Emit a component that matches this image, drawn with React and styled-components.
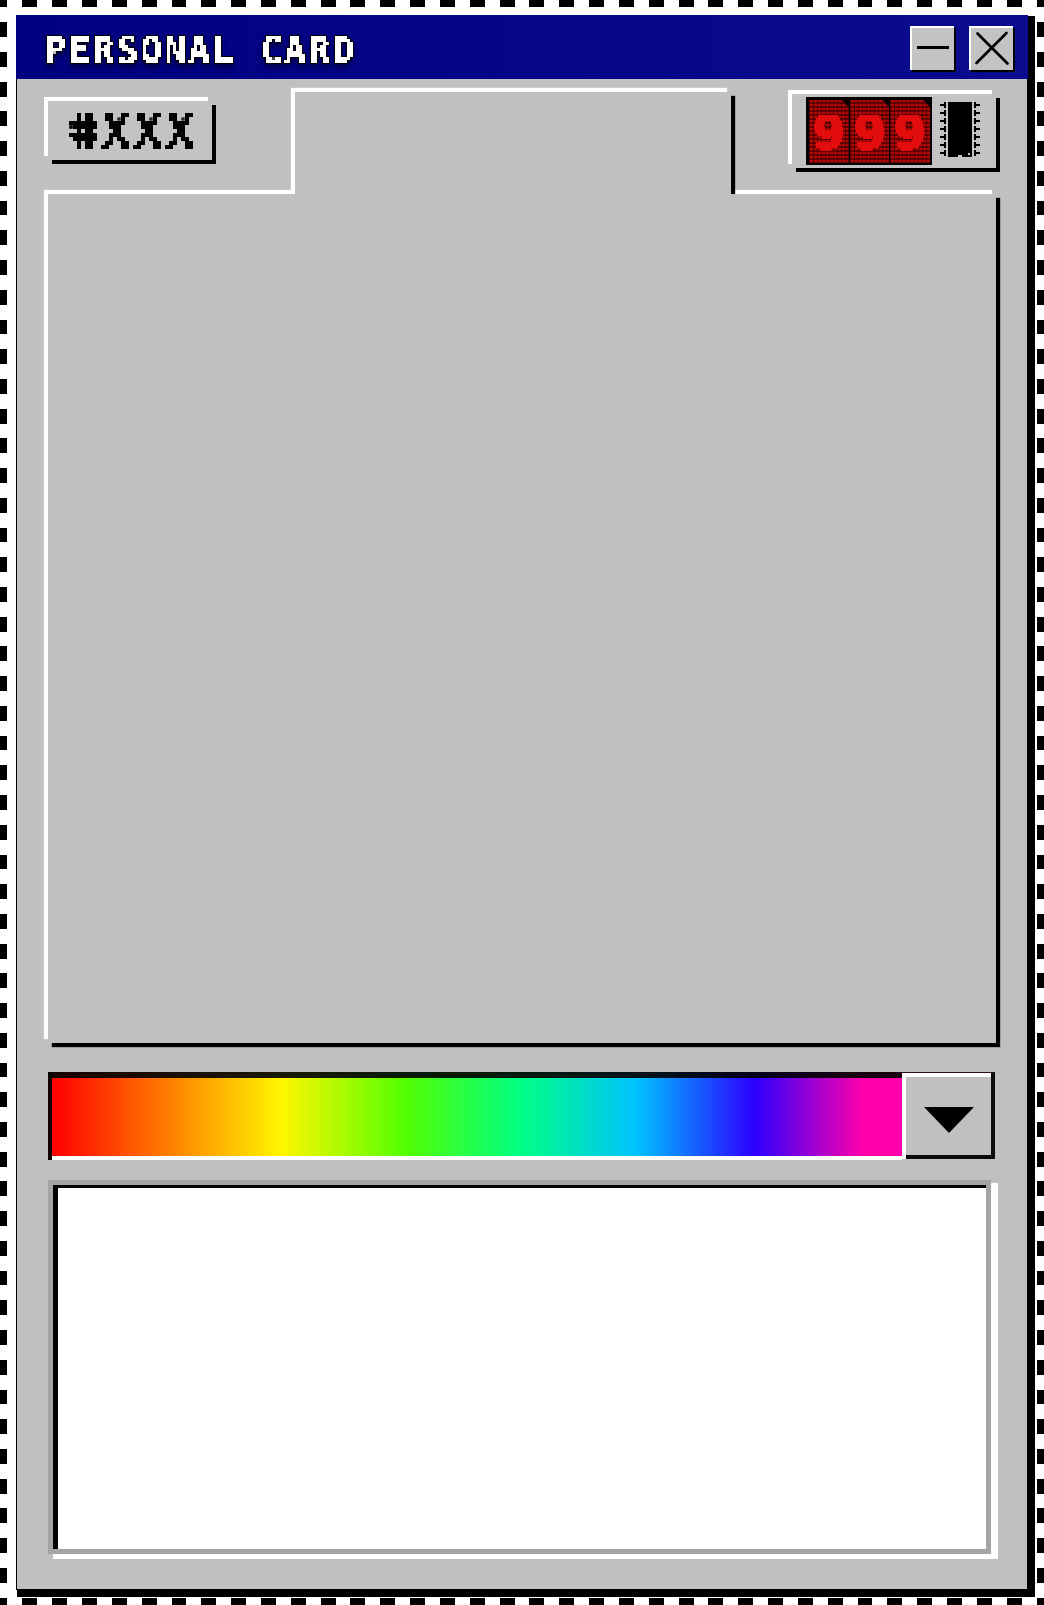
import React from "react";
import styled, { createGlobalStyle } from "styled-components";

const GlobalStyle = createGlobalStyle`
  * { box-sizing: border-box; }
  body { margin: 0; background: #fff; }
`;

const mono = `"DejaVu Sans Mono", "Liberation Mono", monospace`;
const stitch = (dir, step) =>
  `repeating-linear-gradient(${dir}, #000 0 ${step / 4}px, #fff ${step / 4}px ${(step * 3) / 4}px, #000 ${(step * 3) / 4}px ${step}px)`;
const across = stitch("to right", 1044 / 35);
const down = stitch("to bottom", 1605 / 54);

const Desktop = styled.main`
  width: 1044px;
  height: 1605px;
  padding: 15px 16px;
  overflow: hidden;
  background:
    ${across} 0 0 / 100% 7px no-repeat,
    ${across} 0 100% / 100% 7px no-repeat,
    ${down} 0 0 / 7px 100% no-repeat,
    ${down} 100% 0 / 7px 100% no-repeat,
    #fff;
`;

const FilterDefs = styled.svg`
  display: block;
  width: 0;
  height: 0;
`;

const Window = styled.section`
  width: 1012px;
  height: 1575px;
  border: 1px solid #000;
  background: #c0c0c0;
  box-shadow: 4px 4px 0 3px #000;
`;

const TitleBar = styled.header`
  display: flex;
  align-items: flex-start;
  justify-content: space-between;
  height: 64px;
  margin: -1px -1px 0;
  padding: 11px 15px 0 29px;
  background: linear-gradient(to right, #000080, #0b0b90);
`;

const PixelText = styled.span`
  display: block;
  filter: url(#pixels-${(p) => p.$cell});
`;

const Title = styled.h1`
  margin: 1px 0 0 -1px;
  font: bold 37px/47px ${mono};
  letter-spacing: 1.73px;
  white-space: pre;
  color: #fff;
  filter: drop-shadow(1px 0 #000) drop-shadow(-1px 0 #000) drop-shadow(0 1px #000)
    drop-shadow(0 -1px #000) drop-shadow(0 4px 2px rgba(0, 0, 0, 0.4));
`;

const Controls = styled.div`
  display: flex;
  gap: 15px;
`;

const ControlButton = styled.button`
  width: 44px;
  height: 44px;
  padding: 0;
  border: solid #fff;
  border-width: 2px 0 0 2px;
  border-radius: 0;
  background: #c3c3c3;
  box-shadow: 2px 2px #000;
  svg { display: block; }
`;

const HeaderRow = styled.div`
  display: flex;
  align-items: flex-start;
  height: 115px;
  padding-left: 31px;
`;

const Raised = styled.div`
  background: #c3c3c3;
  box-shadow: -4px -4px #fff, 4px 4px #000;
`;

const IdBadge = styled(Raised)`
  width: 164px;
  height: 59px;
  margin-top: 22px;
  padding-left: 21px;
  font: bold 49px/61px ${mono};
  letter-spacing: 2.5px;
  color: #000;
`;

const Hash = styled.span`
  display: inline-block;
  transform: skewX(13deg);
`;

const FolderTab = styled.div`
  position: relative;
  z-index: 1;
  width: 436px;
  height: 102px;
  margin: 13px 61px 0 83px;
  background: #c0c0c0;
  box-shadow: -4px -4px 1px #fff, 4px 4px 1px #000;
  clip-path: inset(-6px -6px 0 -6px);
`;

const Counter = styled(Raised)`
  display: flex;
  width: 204px;
  height: 74px;
  margin-top: 15px;
  padding: 3px 0 0 14px;
`;

const LedPanel = styled.div`
  display: flex;
  gap: 1px;
  width: 126px;
  height: 68px;
  padding: 3px 2px 2px 3px;
  background: #000;
`;

const Digit = styled.div`
  flex: 1;
  height: 63px;
  overflow: hidden;
  clip-path: polygon(0 0, 33px 0, 100% 7px, 100% 100%, 0 100%);
  background:
    repeating-linear-gradient(to right, rgba(40, 0, 0, 0.5) 0 1px, transparent 1px 4px),
    repeating-linear-gradient(to bottom, #b10808 0 2px, #680000 2px 4px);
  font: bold 47px/65px ${mono};
  text-align: center;
  color: #e20d0d;
  -webkit-text-stroke: 1px #e20d0d;
`;

const Stretch = styled.div`
  transform: scaleX(1.13);
`;

const ChipIcon = styled.svg`
  display: block;
  margin: 5px 0 0 8px;
`;

const FolderBody = styled.div`
  width: 948px;
  height: 849px;
  margin-left: 31px;
  background: #c0c0c0;
  box-shadow: -4px -4px 1px #fff, 4px 4px 1px #000;
`;

const ColorPicker = styled.div`
  display: flex;
  width: 948px;
  height: 88px;
  margin: 29px 0 0 31px;
`;

const Spectrum = styled.div`
  width: 854px;
  padding-left: 4px;
  background: linear-gradient(to right, #ff0000 0, #ff7800 13%, #fff600 27%, #53ff00 41.5%, #00ff83 55%, #00c3ff 68.7%, #2c00ff 82.6%, #ff00aa 95.5%) content-box;
  box-shadow: inset 0 6px rgba(0, 0, 0, 0.9), inset 4px 0 #140000, inset 0 -4px #fff;
`;

const DropButton = styled.button`
  display: grid;
  place-items: center;
  width: 93px;
  height: 87px;
  padding: 9px 0 0;
  border: 0;
  background: #c0c0c0;
  box-shadow: inset 0 1px #2a1020, inset -4px 0 #0c0c0c, inset 0 5px #fff,
    inset 4px 0 #fff, inset 0 -4px #0c0c0c;
`;

const TextPanel = styled.div`
  width: 943px;
  height: 374px;
  margin: 20px 0 0 31px;
  border: 5px solid #a4a4a4;
  background: #fff;
  box-shadow: inset 5px 3px #000, 5px 5px #fff, 7px 5px #fff, 7px 3px #fff;
`;

const PixelFilter = ({ cell, threshold }) => (
  <filter
    id={`pixels-${cell}`}
    filterUnits="userSpaceOnUse"
    primitiveUnits="userSpaceOnUse"
    x="0"
    y="0"
    width="400"
    height="72"
    colorInterpolationFilters="sRGB"
  >
    <feFlood x="1" y="1" width="1" height="1" floodColor="#000" result="dot" />
    <feComposite in="dot" in2="dot" operator="over" x="0" y="0" width={cell} height={cell} />
    <feTile result="grid" />
    <feComposite in="SourceGraphic" in2="grid" operator="in" />
    <feComponentTransfer>
      <feFuncA type="linear" slope="20" intercept={-20 * threshold} />
    </feComponentTransfer>
    <feMorphology operator="dilate" radius="1" result="cells" />
    {cell === 4 && (
      <>
        <feOffset in="cells" dx="1" dy="0" result="right" />
        <feMerge result="wide">
          <feMergeNode in="cells" />
          <feMergeNode in="right" />
        </feMerge>
        <feOffset in="wide" dx="0" dy="1" result="lower" />
        <feMerge>
          <feMergeNode in="wide" />
          <feMergeNode in="lower" />
        </feMerge>
      </>
    )}
  </filter>
);

const pins = [0, 1, 2, 3, 4, 5, 6];

export default function App() {
  return (
    <>
      <GlobalStyle />
      <Desktop>
        <FilterDefs aria-hidden="true">
          <PixelFilter cell={3} threshold={0.5} />
          <PixelFilter cell={4} threshold={0.4} />
        </FilterDefs>
        <Window>
          <TitleBar>
            <Title>
              <PixelText $cell={3}>PERSONAL CARD</PixelText>
            </Title>
            <Controls>
              <ControlButton aria-label="Minimize">
                <svg width="42" height="42">
                  <path d="M5 19.5H37" stroke="#000" strokeWidth="3" />
                </svg>
              </ControlButton>
              <ControlButton aria-label="Close">
                <svg width="42" height="42" fill="none">
                  <path d="M6.5 5.5L36.5 35.5M35.5 5L5.5 35" stroke="#000" strokeWidth="2.7" strokeLinecap="round" />
                </svg>
              </ControlButton>
            </Controls>
          </TitleBar>
          <HeaderRow>
            <IdBadge>
              <PixelText $cell={4}>
                <Hash>#</Hash>XXX
              </PixelText>
            </IdBadge>
            <FolderTab />
            <Counter>
              <LedPanel>
                {[9, 9, 9].map((n, i) => (
                  <Digit key={i}>
                    <Stretch>
                      <PixelText $cell={3}>{n}</PixelText>
                    </Stretch>
                  </Digit>
                ))}
              </LedPanel>
              <ChipIcon width="40" height="55" shapeRendering="crispEdges">
                <path d="M8 0H32V55H22V54H18V55H8Z" />
                <path d="M18 53h4v2h-4z" fill="#c3c3c3" />
                <path d="M28 51h2v2h-2z" fill="#c3c3c3" />
                {pins.map((p) => (
                  <path key={p} d={`M0 ${p * 8 + 2}h4v-2h2v6h-2v-2h-4zM34 ${p * 8}h2v2h4v2h-4v2h-2z`} />
                ))}
              </ChipIcon>
            </Counter>
          </HeaderRow>
          <FolderBody />
          <ColorPicker>
            <Spectrum />
            <DropButton aria-label="Expand">
              <svg width="50" height="26" viewBox="0 0 50 26">
                <path d="M0 0H50L25 26Z" />
              </svg>
            </DropButton>
          </ColorPicker>
          <TextPanel />
        </Window>
      </Desktop>
    </>
  );
}
